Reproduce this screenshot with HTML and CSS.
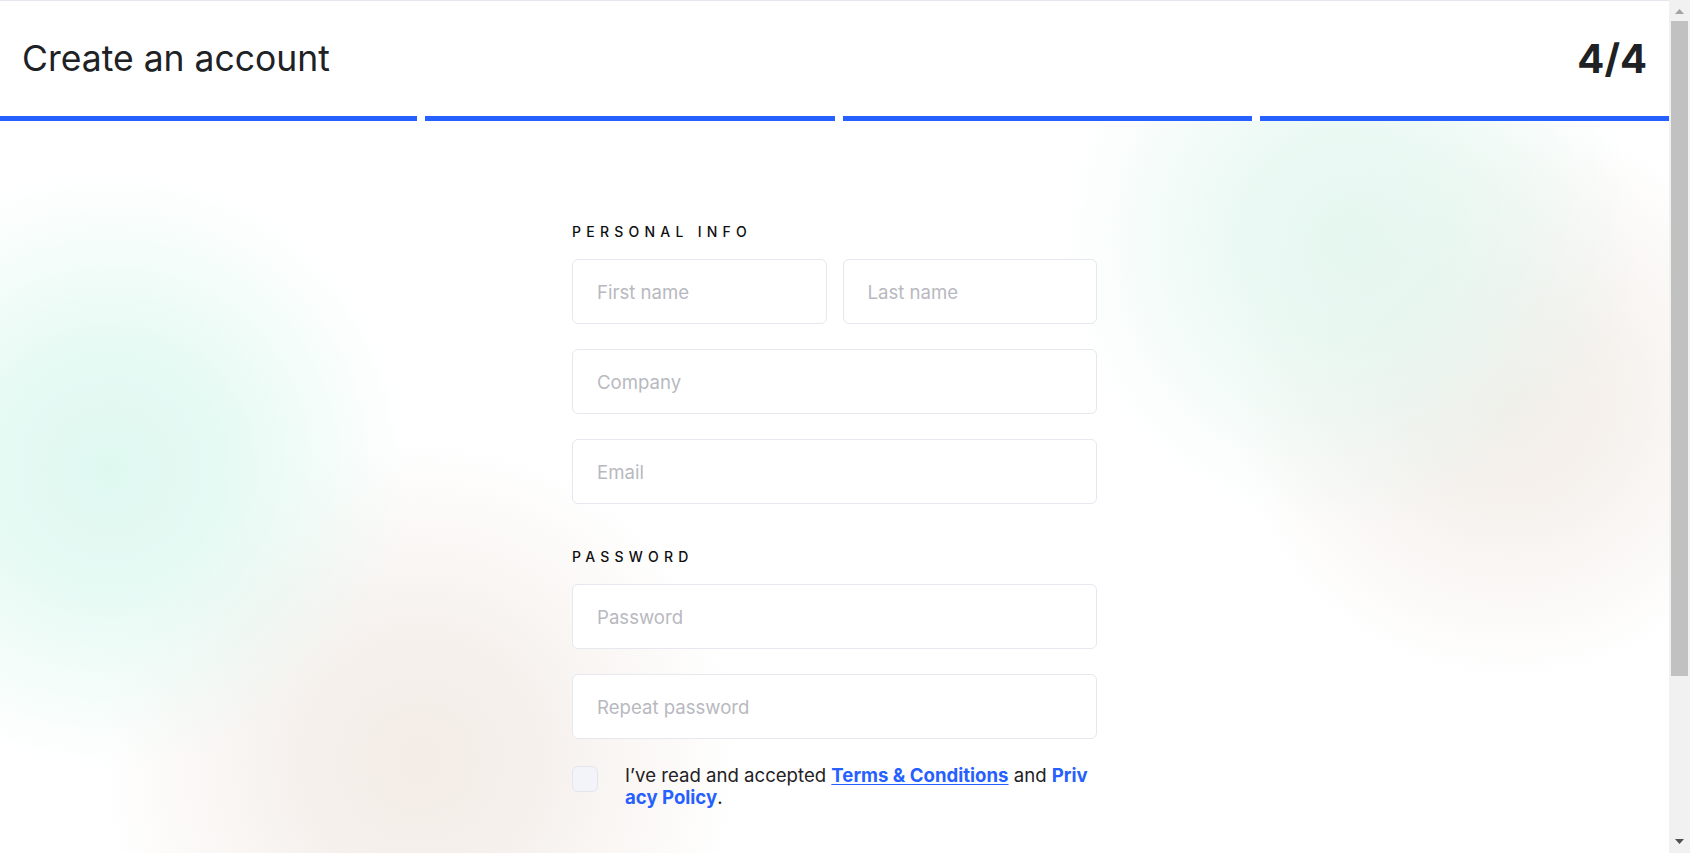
FILE: index.html
```html
<!DOCTYPE html>
<html lang="en">
<head>
<meta charset="utf-8">
<title>Create an account</title>
<link rel="stylesheet" href="styles.css">
</head>
<body>
<div class="page">
  <header class="header">
    <div class="header-row">
      <h1 class="title">Create an account</h1>
      <div class="step">4/4</div>
    </div>
    <div class="progress">
      <span class="bar bar-first"></span>
      <span class="bar"></span>
      <span class="bar"></span>
      <span class="bar"></span>
    </div>
  </header>
  <main class="main">
    <form class="form">
      <section class="section">
        <h2 class="section-label">Personal info</h2>
        <div class="row">
          <input class="field" type="text" placeholder="First name">
          <input class="field" type="text" placeholder="Last name">
        </div>
        <input class="field" type="text" placeholder="Company">
        <input class="field" type="email" placeholder="Email">
      </section>
      <section class="section section-password">
        <h2 class="section-label">Password</h2>
        <input class="field" type="password" placeholder="Password">
        <input class="field" type="password" placeholder="Repeat password">
      </section>
      <label class="terms">
        <span class="checkbox"></span>
        <span class="terms-text">I’ve read and accepted <a class="link link-underline" href="#">Terms &amp; Conditions</a> and <a class="link" href="#">Privacy Policy</a>.</span>
      </label>
    </form>
  </main>
</div>
<div class="scrollbar" aria-hidden="true">
  <svg class="sb-arrow sb-up" width="21" height="17" viewBox="0 0 21 17"><polygon points="6,14 15,14 10.5,9" fill="#a3a3a3"/></svg>
  <div class="sb-track"><div class="sb-thumb"></div></div>
  <svg class="sb-arrow sb-down" width="21" height="17" viewBox="0 0 21 17"><polygon points="6,3 15,3 10.5,8" fill="#505050"/></svg>
</div>
</body>
</html>
```

FILE: styles.css
```css
* { box-sizing: border-box; }

html, body {
  margin: 0;
  padding: 0;
}

body {
  font-family: Inter, "Liberation Sans", sans-serif;
  color: #1f2124;
  background: #ffffff;
  overflow: hidden;
}

.page {
  margin-right: 21px;
  min-height: 1065px;
  background-color: #ffffff;
  background-image:
    radial-gradient(circle 300px at 110px 470px, rgba(222, 248, 240, 1) 0%, rgba(222, 248, 240, 0.75) 40%, rgba(222, 248, 240, 0) 100%),
    radial-gradient(circle 320px at 420px 760px, rgba(243, 236, 231, 1) 0%, rgba(243, 236, 231, 0.75) 40%, rgba(243, 236, 231, 0) 100%),
    radial-gradient(circle 290px at 1350px 240px, rgba(229, 247, 240, 1) 0%, rgba(229, 247, 240, 0.75) 40%, rgba(229, 247, 240, 0) 100%),
    radial-gradient(circle 280px at 1510px 400px, rgba(243, 237, 232, 1) 0%, rgba(243, 237, 232, 0.75) 40%, rgba(243, 237, 232, 0) 100%);
  background-repeat: no-repeat;
}

.header {
  background: #ffffff;
  border-top: 1px solid #e6e6ef;
}

.header-row {
  height: 115px;
  padding: 0 22px 0 22px;
  display: flex;
  align-items: center;
  justify-content: space-between;
}

.title {
  margin: 0;
  font-size: 35.5px;
  font-weight: 400;
  color: #202124;
}

.step {
  font-size: 40px;
  font-weight: 700;
  color: #202124;
}

.progress {
  display: flex;
  gap: 8px;
  height: 5px;
}

.bar {
  flex: 1 0 0;
  background: #2660ff;
}

.bar-first {
  flex: 1 0 8px;
}

.main {
  padding-top: 101px;
  padding-bottom: 120px;
}

.form {
  width: 525px;
  margin: 0 auto;
}

.section {
  display: flex;
  flex-direction: column;
  gap: 25px;
}

.section-password {
  margin-top: 43px;
}

.section-label {
  margin: 0 0 -8px 0;
  font-size: 14px;
  line-height: 20px;
  font-weight: 500;
  letter-spacing: 5.25px;
  text-transform: uppercase;
  color: #0e0f10;
}

.row {
  display: flex;
  gap: 16px;
}

.row .field {
  flex: 1 1 0;
  min-width: 0;
}

.field {
  display: block;
  width: 100%;
  height: 65px;
  padding: 0 24px;
  border: 1px solid #e6e7ef;
  border-radius: 6px;
  background: #ffffff;
  font-family: Inter, "Liberation Sans", sans-serif;
  font-size: 18.6px;
  color: #1f2124;
  outline: none;
}

.field::placeholder {
  color: #b8b9c0;
}

.terms {
  display: flex;
  align-items: flex-start;
  gap: 27px;
  margin-top: 27px;
}

.checkbox {
  flex: 0 0 26px;
  width: 26px;
  height: 26px;
  border: 1px solid #e4e5ee;
  border-radius: 6px;
  background: #f3f4fa;
}

.terms-text {
  margin-top: -2px;
  font-size: 18.6px;
  line-height: 22px;
  word-break: break-all;
  color: #1f2124;
}

.link {
  color: #2660ff;
  font-weight: 700;
  text-decoration: none;
}

.link-underline {
  text-decoration: underline;
  text-underline-offset: 2px;
}

.scrollbar {
  position: fixed;
  top: 0;
  right: 0;
  bottom: 0;
  width: 21px;
  background: #f1f1f1;
  display: flex;
  flex-direction: column;
}

.sb-arrow {
  display: block;
  flex: 0 0 17px;
}

.sb-track {
  flex: 1;
  padding: 4px 2px 0 2px;
}

.sb-thumb {
  height: 655px;
  background: #c1c1c1;
}
```
